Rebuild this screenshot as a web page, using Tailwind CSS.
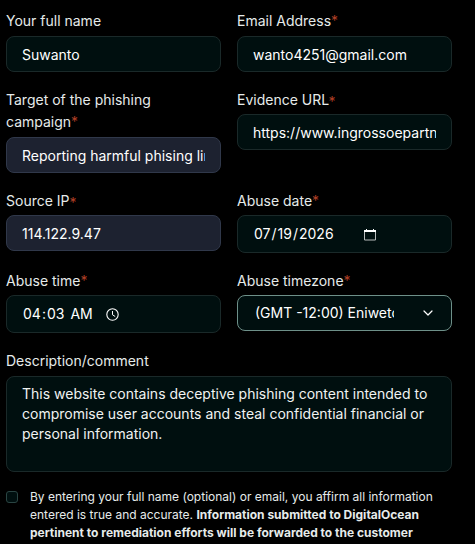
<!DOCTYPE html>
<html lang="en">
<head>
<meta charset="utf-8">
<title>Report abuse</title>
<script src="https://cdn.jsdelivr.net/npm/@tailwindcss/browser@4"></script>
</head>
<body class="bg-black text-[#e6ebea] font-['Inter',sans-serif] text-[14px] leading-[22px] h-[544px] overflow-hidden">
<form class="w-[446px] ml-[6px] pt-[10px]">
  <div class="grid grid-cols-2 gap-x-4 grid-rows-[79px_101px_80px_80px]">
    <div>
      <label class="block mb-1">Your full name</label>
      <input type="text" value="Suwanto" class="block w-full h-9 px-[15px] rounded-lg border border-[#1a2929] bg-[#000f0f] text-white">
    </div>
    <div>
      <label class="block mb-1">Email Address<span class="text-[#b03f26]">*</span></label>
      <input type="text" value="wanto4251@gmail.com" class="block w-full h-9 px-[15px] rounded-lg border border-[#1a2929] bg-[#000f0f] text-white">
    </div>
    <div>
      <label class="block mb-1">Target of the phishing campaign<span class="text-[#b03f26]">*</span></label>
      <input type="text" value="Reporting harmful phising link" class="block w-full h-9 px-[15px] rounded-lg border border-[#30384a] bg-[#1d2230] text-white">
    </div>
    <div>
      <label class="block mb-[3px]">Evidence URL<span class="relative top-[2px] text-[#b03f26]">*</span></label>
      <input type="text" value="https://www.ingrossoepartners.com" class="block w-full h-9 px-[15px] rounded-lg border border-[#1a2929] bg-[#000f0f] text-white">
    </div>
    <div>
      <label class="block mb-[3px]">Source IP<span class="relative top-[2px] text-[#b03f26]">*</span></label>
      <input type="text" value="114.122.9.47" class="block w-full h-9 px-[15px] rounded-lg border border-[#30384a] bg-[#1d2230] text-white">
    </div>
    <div>
      <label class="block mb-[3px]">Abuse date<span class="text-[#b03f26]">*</span></label>
      <div class="flex items-center h-[38px] pl-4 rounded-lg border border-[#1a2929] bg-[#000f0f] text-white">
        <div class="w-[110px] whitespace-nowrap"><span>07</span><span class="px-px">/</span><span>19</span><span class="px-px">/</span><span>2026</span></div>
        <svg class="w-3 h-[13px]" viewBox="0 0 12 13" fill="none"><path d="M.5 2.5h11v9.5H.5z" stroke="#b8bcbc"/><path d="M0 2h12v2H0zM2 1h1v1H2zM9 1h1v1H9z" fill="#fff"/></svg>
      </div>
    </div>
    <div>
      <label class="block mb-[3px]">Abuse time<span class="text-[#b03f26]">*</span></label>
      <div class="flex items-center h-[38px] pl-4 rounded-lg border border-[#1a2929] bg-[#000f0f] text-white">
        <div class="w-[83px] whitespace-nowrap"><span>04</span><span class="px-px">:</span><span>03</span><span class="pl-1.5">AM</span></div>
        <svg class="w-[13px] h-[13px]" viewBox="0 0 13 13" fill="none" stroke="#fff"><circle cx="6.5" cy="6.5" r="5.7" stroke-width="1.1"/><path d="M6.5 3v3.8l2.7 1.7"/></svg>
      </div>
    </div>
    <div>
      <label class="block mb-[3px]">Abuse timezone<span class="text-[#b03f26]">*</span></label>
      <div class="flex items-center justify-between h-9 pl-[17px] pr-[18px] rounded-lg border border-[#6e9089] bg-[#000f0f] text-white">
        <div class="w-[139px] overflow-hidden whitespace-nowrap">(GMT -12:00) Eniwetok, Kwajalein</div>
        <svg class="w-[10px] h-[6px]" viewBox="0 0 10 6" fill="none" stroke="#fff" stroke-width="1.2" stroke-linecap="round" stroke-linejoin="round"><path d="M1 1l4 4 4-4"/></svg>
      </div>
    </div>
  </div>
  <label class="block mb-1">Description/comment</label>
  <textarea class="block w-full h-24 px-[15px] py-[7px] resize-none overflow-hidden rounded-lg border border-[#1a2929] bg-[#000f0f] text-[#f0f3f2] leading-5">This website contains deceptive phishing content intended to compromise user accounts and steal confidential financial or personal information.</textarea>
  <div class="flex mt-4 gap-3">
    <span class="shrink-0 w-3 h-3 mt-[3px] rounded-[3px] border border-[#2a4543] bg-[#000f0f]"></span>
    <p class="text-[12px] leading-[18px] whitespace-nowrap">By entering your full name (optional) or email, you affirm all information<br>entered is true and accurate. <b>Information submitted to DigitalOcean<br>pertinent to remediation efforts will be forwarded to the customer</b></p>
  </div>
</form>
</body>
</html>
